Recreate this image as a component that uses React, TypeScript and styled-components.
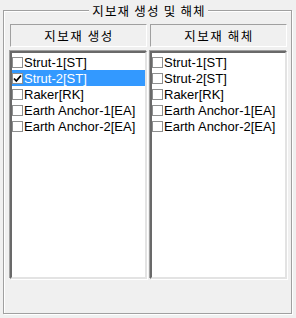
import styled, { createGlobalStyle } from "styled-components";

const GlobalStyle = createGlobalStyle`
  html, body {
    margin: 0;
    padding: 0;
    background: #f0f0f0;
  }
  * {
    box-sizing: border-box;
  }
`;

const Window = styled.div`
  width: 296px;
  height: 318px;
  padding: 3px 4px 4px 3px;
  display: flex;
  background: #f0f0f0;
  font-family: "Liberation Sans", Arial, sans-serif;
`;

const GroupBox = styled.fieldset`
  flex: 1;
  margin: 0;
  min-width: 0;
  padding: 6px 4px 0 6px;
  border: 1px solid #a0a0a0;
  box-shadow: 1px 1px 0 #fff, inset 1px 1px 0 #fff;
`;

const Legend = styled.legend`
  margin: 0 auto;
  padding: 0 2px 0 3px;
  font-family: "Noto Sans CJK KR", sans-serif;
  font-size: 12.5px;
  letter-spacing: 1.2px;
  line-height: 15px;
  color: #000;
  background: #f0f0f0;
`;

const Columns = styled.div`
  display: grid;
  grid-template-columns: 137px 137px;
  grid-template-rows: 23px 228px;
  column-gap: 3px;
  row-gap: 4px;
`;

const Header = styled.div`
  display: flex;
  align-items: center;
  justify-content: center;
  padding-left: 1px;
  border-top: 1px solid #a0a0a0;
  border-left: 1px solid #a0a0a0;
  border-right: 1px solid #fff;
  border-bottom: 1px solid #fff;
  font-family: "Noto Sans CJK KR", sans-serif;
  font-size: 12.5px;
  letter-spacing: 1.5px;
  color: #000;
`;

const ListBox = styled.ul`
  margin: 0;
  padding: 1px 0 0;
  list-style: none;
  background: #fff;
  border-style: solid;
  border-width: 2px;
  border-color: #696969 #e3e3e3 #e3e3e3 #696969;
  box-shadow: -1px -1px 0 #a0a0a0, 1px 1px 0 #fff;
  overflow: hidden;
`;

const Item = styled.li<{ $selected?: boolean }>`
  display: flex;
  align-items: center;
  height: 16px;
  gap: 1px;
  background: ${(p) => (p.$selected ? "#3399ff" : "transparent")};
  color: ${(p) => (p.$selected ? "#fff" : "#000")};
  font-size: 13px;
  white-space: nowrap;
`;

const Box = styled.span`
  flex: none;
  width: 11px;
  height: 11px;
  border: 1px solid #8e8f8f;
  background: #fff;
  display: flex;
  align-items: center;
  justify-content: center;
`;

const items = [
  "Strut-1[ST]",
  "Strut-2[ST]",
  "Raker[RK]",
  "Earth Anchor-1[EA]",
  "Earth Anchor-2[EA]",
];

function Check({ checked }: { checked?: boolean }) {
  return (
    <Box>
      {checked && (
        <svg width="9" height="9" viewBox="0 0 9 9">
          <path d="M1 4.5 L3.3 7 L8 1.5" stroke="#000" strokeWidth="1.8" fill="none" />
        </svg>
      )}
    </Box>
  );
}

function CheckList({ selected }: { selected?: number }) {
  return (
    <ListBox>
      {items.map((name, i) => (
        <Item key={name} $selected={i === selected}>
          <Check checked={i === selected} />
          {name}
        </Item>
      ))}
    </ListBox>
  );
}

export default function App() {
  return (
    <>
      <GlobalStyle />
      <Window>
        <GroupBox>
          <Legend>지보재 생성 및 해체</Legend>
          <Columns>
            <Header>지보재 생성</Header>
            <Header>지보재 해체</Header>
            <CheckList selected={1} />
            <CheckList />
          </Columns>
        </GroupBox>
      </Window>
    </>
  );
}
